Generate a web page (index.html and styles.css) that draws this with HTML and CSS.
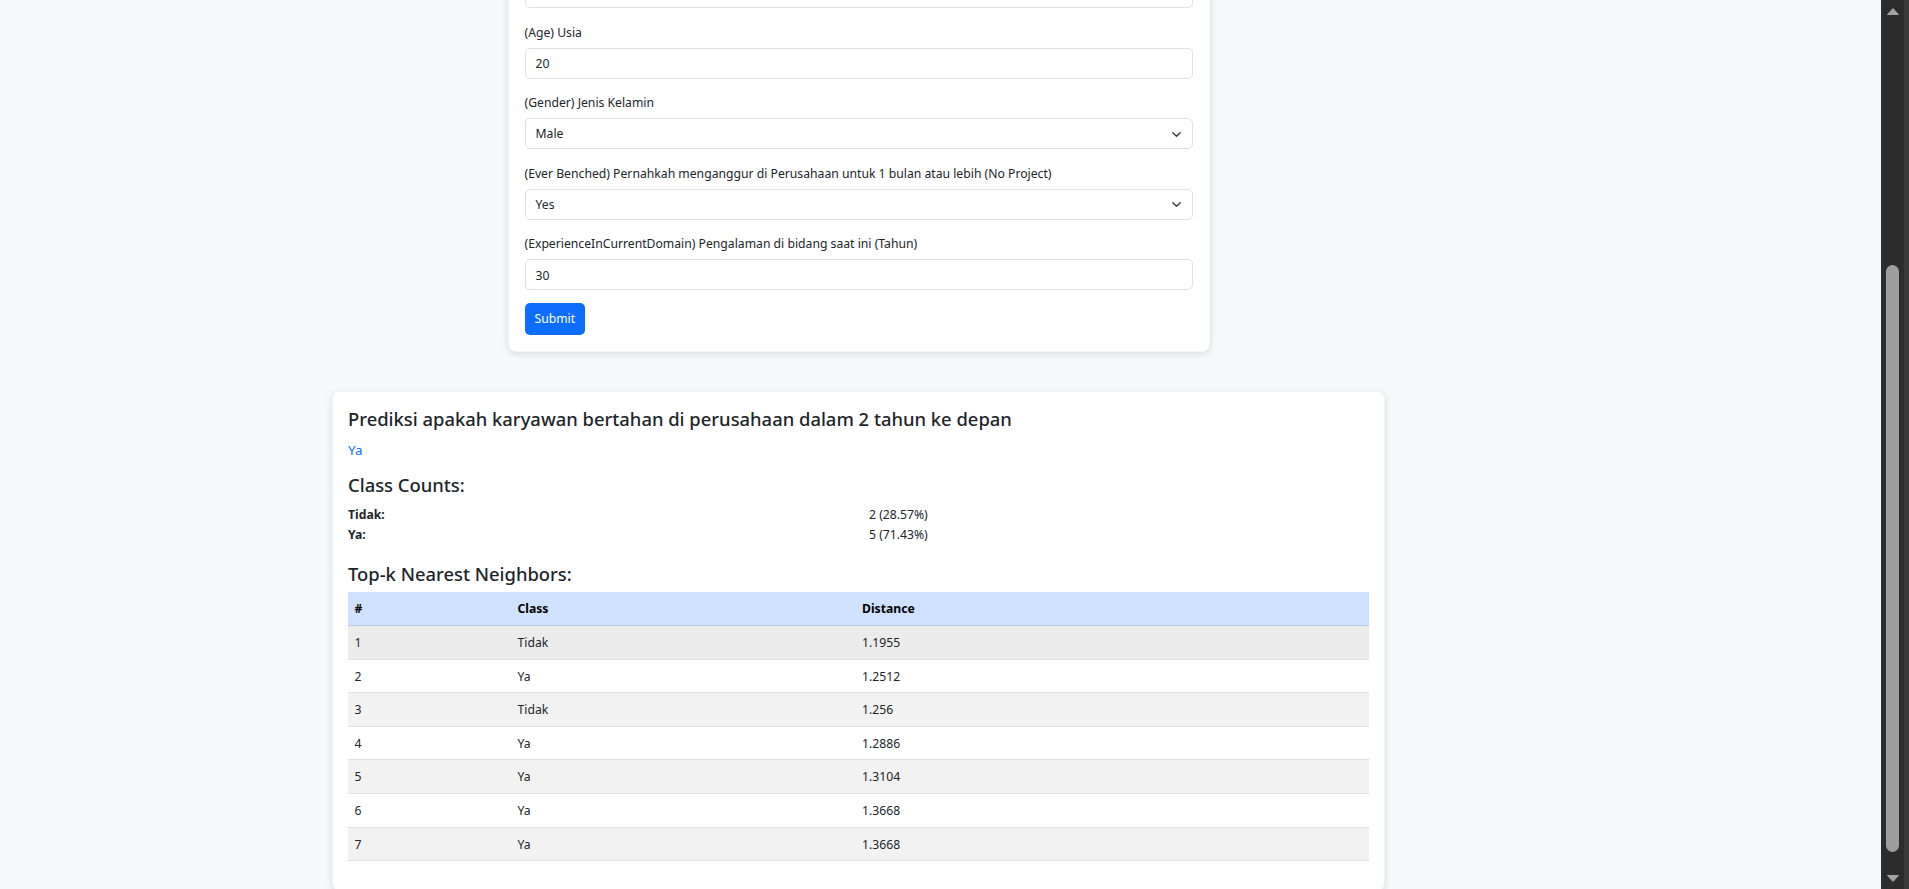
FILE: index.html
```html
<!DOCTYPE html>
<html lang="id">
<head>
<meta charset="utf-8">
<title>Prediksi Karyawan</title>
<link rel="stylesheet" href="styles.css">
</head>
<body>
<div class="viewport">
  <main class="page">
    <div class="container scrolled">
      <form class="card form-card">
        <div class="group">
          <label class="form-label">(PaymentTier) Tingkat Gaji</label>
          <div class="form-select"><span>(Tinggi)</span><svg class="chev" viewBox="0 0 9 5"><polyline points="0.8,0.8 4.5,4.2 8.2,0.8"/></svg></div>
        </div>
        <div class="group">
          <label class="form-label">(Age) Usia</label>
          <input class="form-control" type="text" value="20">
        </div>
        <div class="group">
          <label class="form-label">(Gender) Jenis Kelamin</label>
          <div class="form-select"><span>Male</span><svg class="chev" viewBox="0 0 9 5"><polyline points="0.8,0.8 4.5,4.2 8.2,0.8"/></svg></div>
        </div>
        <div class="group">
          <label class="form-label">(Ever Benched) Pernahkah menganggur di Perusahaan untuk 1 bulan atau lebih (No Project)</label>
          <div class="form-select"><span>Yes</span><svg class="chev" viewBox="0 0 9 5"><polyline points="0.8,0.8 4.5,4.2 8.2,0.8"/></svg></div>
        </div>
        <div class="group">
          <label class="form-label">(ExperienceInCurrentDomain) Pengalaman di bidang saat ini (Tahun)</label>
          <input class="form-control" type="text" value="30">
        </div>
        <button class="btn" type="button">Submit</button>
      </form>

      <section class="card result-card">
        <h4 class="title">Prediksi apakah karyawan bertahan di perusahaan dalam 2 tahun ke depan</h4>
        <p class="prediction">Ya</p>
        <h4 class="title counts-title">Class Counts:</h4>
        <div class="counts">
          <strong>Tidak:</strong><span>2 (28.57%)</span>
          <strong>Ya:</strong><span>5 (71.43%)</span>
        </div>
        <h4 class="title table-title">Top-k Nearest Neighbors:</h4>
        <table class="table">
          <colgroup><col class="col-idx"><col class="col-class"><col></colgroup>
          <thead>
            <tr><th>#</th><th>Class</th><th>Distance</th></tr>
          </thead>
          <tbody>
            <tr class="is-hover"><td>1</td><td>Tidak</td><td>1.1955</td></tr>
            <tr><td>2</td><td>Ya</td><td>1.2512</td></tr>
            <tr><td>3</td><td>Tidak</td><td>1.256</td></tr>
            <tr><td>4</td><td>Ya</td><td>1.2886</td></tr>
            <tr><td>5</td><td>Ya</td><td>1.3104</td></tr>
            <tr><td>6</td><td>Ya</td><td>1.3668</td></tr>
            <tr><td>7</td><td>Ya</td><td>1.3668</td></tr>
          </tbody>
        </table>
      </section>
    </div>
  </main>
  <aside class="scrollbar">
    <div class="sb-btn"><svg class="sb-arrow" viewBox="0 0 12 7"><path d="M6 0.5 L11.5 6.5 H0.5 Z"/></svg></div>
    <div class="sb-track"><div class="sb-thumb"></div></div>
    <div class="sb-btn"><svg class="sb-arrow" viewBox="0 0 12 7"><path d="M0.5 0.5 H11.5 L6 6.5 Z"/></svg></div>
  </aside>
</div>
</body>
</html>
```

FILE: styles.css
```css
* { box-sizing: border-box; }
html, body { margin: 0; height: 100%; }
body {
  background: #f8f9fa;
  color: #212529;
  font-family: "Noto Sans", "Open Sans", sans-serif;
  font-size: 12.2px;
  line-height: 19.6px;
  overflow: hidden;
}
.viewport { display: flex; height: 100vh; }
.page { flex: 1; overflow: hidden; }
.container { width: 1053px; margin-left: 332px; }
.scrolled { margin-top: -67px; }

.card {
  background: #fff;
  border: 1px solid rgba(0, 0, 0, 0.04);
  border-radius: 8px;
  box-shadow: 0 2px 7px rgba(0, 0, 0, 0.13);
}
.form-card { display: block; width: 702px; margin: 0 auto; padding: 16px; }
.group { margin-bottom: 12.5px; }
.form-label { display: block; line-height: 20px; padding-top: 2px; margin-bottom: 5px; }
.form-control, .form-select {
  display: flex;
  align-items: center;
  width: 100%;
  height: 31px;
  padding: 1px 10px 0;
  border: 1px solid #dee2e6;
  border-radius: 5px;
  background: #fff;
  font: inherit;
  color: #212529;
  outline: none;
}
.form-select { justify-content: space-between; padding-right: 11px; }
.chev { width: 9px; height: 5px; }
.chev polyline { fill: none; stroke: #343a40; stroke-width: 1.4; stroke-linecap: round; stroke-linejoin: round; }
.btn {
  display: block;
  height: 32px;
  padding: 1px 10px 0;
  background: #0d6efd;
  color: #fff;
  border: none;
  border-radius: 5px;
  font: inherit;
}

.result-card { margin-top: 39px; padding: 15px 15px 16px; }
.title { font-size: 18.4px; font-weight: 500; line-height: 23.5px; margin: 0 0 10px; }
.prediction { color: #0d6efd; font-size: 13.4px; margin: 0 0 13px; padding-top: 1px; line-height: 19px; }
.counts-title { margin-bottom: 8.7px; }
.counts { display: grid; grid-template-columns: 521px 1fr; margin-bottom: 17.6px; }
.counts strong { font-weight: 700; }
.table-title { margin-bottom: 7px; }
.table { width: 100%; border-collapse: collapse; margin-bottom: 13px; }
.col-idx { width: 163px; }
.col-class { width: 344.5px; }
.table th, .table td { padding: 7px 6.5px 6px; text-align: left; border-bottom: 1px solid #dee2e6; }
.table thead th { background: #cfe2ff; color: #000; font-weight: 700; border-bottom-color: #bacbe6; }
.table tbody tr:nth-child(odd) td { background: #f2f2f2; }
.table tbody tr.is-hover td { background: #ececec; }

.scrollbar {
  width: 28px;
  background: #2c2c2c;
  border-right: 5px solid #383838;
  display: flex;
  flex-direction: column;
}
.sb-btn { height: 22px; display: flex; align-items: center; justify-content: center; }
.sb-arrow { width: 12px; height: 7px; }
.sb-arrow path { fill: #a3a3a3; stroke: #a3a3a3; stroke-width: 1; stroke-linejoin: round; }
.sb-track { flex: 1; padding: 243px 5px 15px; display: flex; }
.sb-thumb { flex: 1; background: #9e9e9e; border-radius: 7px; }
```
